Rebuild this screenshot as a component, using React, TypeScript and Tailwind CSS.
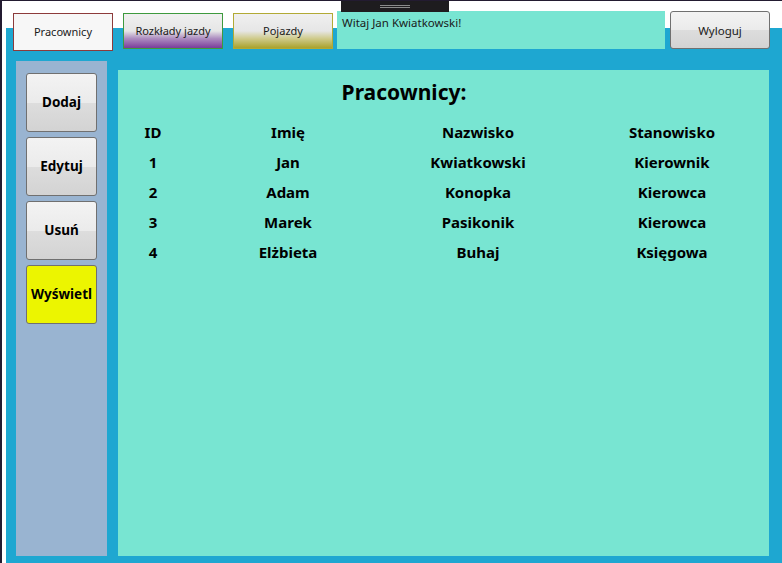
import React from 'react';

const rows = [
  { id: '1', imie: 'Jan', nazwisko: 'Kwiatkowski', stanowisko: 'Kierownik' },
  { id: '2', imie: 'Adam', nazwisko: 'Konopka', stanowisko: 'Kierowca' },
  { id: '3', imie: 'Marek', nazwisko: 'Pasikonik', stanowisko: 'Kierowca' },
  { id: '4', imie: 'Elżbieta', nazwisko: 'Buhaj', stanowisko: 'Księgowa' },
];

const btnBg = 'bg-[linear-gradient(to_bottom,#f3f3f3_0%,#ebebeb_50%,#dddddd_50%,#d3d3d3_100%)]';

const SideButton: React.FC<{ label: string; active?: boolean }> = ({ label, active }) => (
  <button
    className={`w-[71px] h-[59px] rounded-[3px] border border-[#707070] text-[13.5px] font-bold text-black ${
      active ? 'bg-[#ecf500]' : btnBg
    }`}
  >
    {label}
  </button>
);

const App: React.FC = () => {
  return (
    <div
      className="relative w-[782px] h-[563px] border-l-2 border-t border-[#231b31] bg-white pl-[4px] overflow-hidden"
      style={{ fontFamily: '"Noto Sans", "Open Sans", sans-serif' }}
    >
      {/* window grip */}
      <div className="absolute left-[339px] top-0 w-[108px] h-[11px] bg-[#1e1c1f] flex flex-col items-center justify-center gap-[1px]">
        <div className="w-[30px] h-px bg-[#8a8a8a]" />
        <div className="w-[30px] h-px bg-[#8a8a8a]" />
      </div>

      <div className="w-[776px] h-[562px] bg-[linear-gradient(to_bottom,#ffffff_27px,#1ea7d1_27px)]">
        {/* Header */}
        <div className="h-[60px] pt-[10px] pl-[7px] flex items-start">
          <div className="mt-[2px] w-[100px] h-[38px] border border-[#8d3b3b] bg-[#f7f7f7] flex items-center justify-center text-[11px] text-[#1a1a1a]">
            Pracownicy
          </div>
          <div className="mt-[2px] ml-[10px] w-[100px] h-[36px] border border-[#3e9a3e] bg-[linear-gradient(to_bottom,#f0f0f0_0%,#e6e6e6_50%,#ad8dc0_72%,#7b3d9b_100%)] flex items-center justify-center text-[11px] text-[#1a1a1a]">
            Rozkłady jazdy
          </div>
          <div className="mt-[2px] ml-[10px] w-[100px] h-[36px] border border-[#b2aa35] bg-[linear-gradient(to_bottom,#f0f0f0_0%,#e6e6e6_50%,#cfcb8c_72%,#aaa22d_100%)] flex items-center justify-center text-[11px] text-[#1a1a1a]">
            Pojazdy
          </div>
          <div className="ml-[4px] w-[328px] h-[38px] bg-[#78e5d2] pl-[5px] pt-[4px] text-[11.5px] text-[#1a1a1a] leading-[16px]">
            Witaj Jan Kwiatkowski!
          </div>
          <button
            className={`ml-[5px] w-[100px] h-[38px] rounded-[3px] border border-[#707070] ${btnBg} text-[11.5px] text-[#1a1a1a] pt-[2px]`}
          >
            Wyloguj
          </button>
        </div>

        {/* Body */}
        <div className="flex pl-[10px] gap-[11px]">
          <div className="w-[91px] h-[495px] bg-[#99b4d1] pt-[12px] pl-[10px] flex flex-col gap-[5px]">
            <SideButton label="Dodaj" />
            <SideButton label="Edytuj" />
            <SideButton label="Usuń" />
            <SideButton label="Wyświetl" active />
          </div>

          <div className="mt-[9px] w-[651px] h-[486px] bg-[#78e5d2] pt-[8px]">
            <div className="w-[572px] h-[28px] leading-[28px] text-center text-[21px] font-bold text-black">
              Pracownicy:
            </div>
            <div className="mt-[11px] grid grid-cols-[70px_200px_180px_208px] text-[15px] font-bold text-black">
              {['ID', 'Imię', 'Nazwisko', 'Stanowisko'].map((h) => (
                <div key={h} className="h-[30px] leading-[30px] text-center">
                  {h}
                </div>
              ))}
              {rows.map((r) => (
                <React.Fragment key={r.id}>
                  <div className="h-[30px] leading-[30px] text-center">{r.id}</div>
                  <div className="h-[30px] leading-[30px] text-center">{r.imie}</div>
                  <div className="h-[30px] leading-[30px] text-center">{r.nazwisko}</div>
                  <div className="h-[30px] leading-[30px] text-center">{r.stanowisko}</div>
                </React.Fragment>
              ))}
            </div>
          </div>
        </div>
      </div>
    </div>
  );
};

export default App;
